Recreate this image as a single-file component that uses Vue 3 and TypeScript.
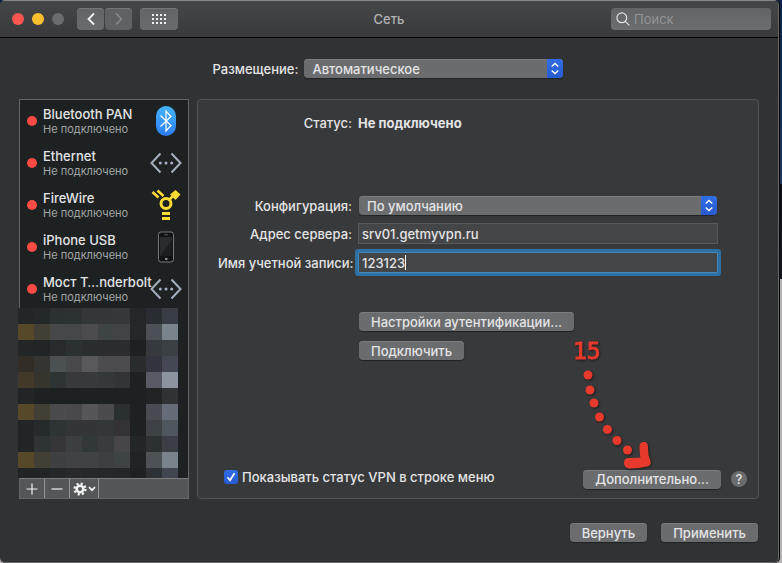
<script setup lang="ts">
import { ref } from 'vue'

type IconName = 'bluetooth' | 'ethernet' | 'firewire' | 'phone'

interface Service {
  name: string
  status: string
  icon: IconName
}

const services: Service[] = [
  { name: 'Bluetooth PAN', status: 'Не подключено', icon: 'bluetooth' },
  { name: 'Ethernet', status: 'Не подключено', icon: 'ethernet' },
  { name: 'FireWire', status: 'Не подключено', icon: 'firewire' },
  { name: 'iPhone USB', status: 'Не подключено', icon: 'phone' },
  { name: 'Мост T…nderbolt', status: 'Не подключено', icon: 'ethernet' },
]

// Pixelated block that hides the remaining services, row by row.
const mosaic: string[][] = [
  ['#222627', '#23282a', '#2b3031', '#2c3132', '#333738', '#343637', '#363738', '#232728', '#282d31', '#383c44'],
  ['#57482a', '#424034', '#464748', '#464748', '#4c4c4e', '#3e4344', '#404445', '#232728', '#4a5055', '#79838b'],
  ['#222627', '#212526', '#272b2b', '#2b3031', '#292d2e', '#2a2c2d', '#2b2c2d', '#1d2122', '#343a3d', '#3a4044'],
  ['#322e27', '#343432', '#4b5152', '#49494b', '#59595b', '#4c4c4e', '#4c4c4e', '#282c2d', '#32353e', '#434854'],
  ['#43392a', '#35342d', '#2e3334', '#38393b', '#37393b', '#343839', '#333436', '#1d2122', '#585b65', '#8b949f'],
  ['#212526', '#1d2122', '#1c2021', '#1c2021', '#1d2122', '#1d2122', '#1d2122', '#1d2122', '#202425', '#2f3335'],
  ['#57482a', '#424034', '#4b4b4d', '#49494b', '#56565a', '#4b4b4d', '#2a2f30', '#1d2122', '#484c52', '#666d78'],
  ['#222527', '#252a2b', '#2e3334', '#343537', '#343537', '#333738', '#333335', '#1d2122', '#3c4246', '#4e575e'],
  ['#212526', '#2e3334', '#363638', '#3b3f40', '#32383a', '#383c3d', '#464648', '#222627', '#2b3033', '#3b3e45'],
  ['#57482a', '#424034', '#3f4041', '#404243', '#404243', '#3e3f40', '#3e4344', '#1f2324', '#4c5256', '#79838b'],
  ['#202425', '#212526', '#232728', '#29292b', '#252729', '#252729', '#232728', '#1d2122', '#2c3135', '#40454f'],
]

const search = ref('')
const location = ref('Автоматическое')
const configuration = ref('По умолчанию')
const server = ref('srv01.getmyvpn.ru')
const account = ref('123123')
const showStatus = ref(true)
const appGrid = [0, 4, 8, 12]
</script>

<template>
  <main class="window">
    <header class="titlebar">
      <div class="tools">
        <div class="lights">
          <button class="light close" aria-label="Закрыть"></button>
          <button class="light minimise" aria-label="Свернуть"></button>
          <button class="light zoom" aria-label="Развернуть" disabled></button>
        </div>
        <div class="nav">
          <button class="tool" aria-label="Назад">
            <svg width="10" height="14" viewBox="0 0 10 14"><path d="M8 1.500 2.500 7 8 12.500" fill="none" stroke="#f0f0f0" stroke-width="1.800" /></svg>
          </button>
          <button class="tool" aria-label="Вперед" disabled>
            <svg width="10" height="14" viewBox="0 0 10 14"><path d="M2 1.500 7.500 7 2 12.500" fill="none" stroke="#8a8b8c" stroke-width="1.500" /></svg>
          </button>
        </div>
        <button class="tool all" aria-label="Показать все">
          <svg width="14" height="10" viewBox="0 0 14 10" fill="#efefef">
            <template v-for="x in appGrid" :key="x">
              <rect v-for="y in [0, 4, 8]" :key="y" :x="x" :y="y" width="2" height="2" />
            </template>
          </svg>
        </button>
      </div>
      <h1>Сеть</h1>
      <div class="search">
        <svg width="14" height="14" viewBox="0 0 14 14" fill="none" stroke="#e2e2e2" stroke-width="1.200">
          <circle cx="5.800" cy="5.800" r="4.900" /><path d="m9.300 9.300 4 4" />
        </svg>
        <input v-model="search" type="text" placeholder="Поиск" aria-label="Поиск" />
      </div>
    </header>

    <div class="location">
      <label for="location">Размещение:</label>
      <div class="popup">
        <select id="location" v-model="location"><option>Автоматическое</option></select>
        <svg class="arrows" viewBox="0 0 16 19"><path d="m4.700 7.500 3.300-3 3.300 3M4.700 11.500l3.300 3 3.300-3" /></svg>
      </div>
    </div>

    <div class="body">
      <aside class="sidebar">
        <ul>
          <li v-for="service in services" :key="service.name">
            <button class="service">
              <span class="dot"></span>
              <span class="text">
                <span class="name">{{ service.name }}</span>
                <span class="state">{{ service.status }}</span>
              </span>
              <svg class="icon" viewBox="0 0 32 32" aria-hidden="true">
                <g v-if="service.icon === 'bluetooth'">
                  <defs>
                    <linearGradient id="bt" x2="0" y2="1"><stop stop-color="#43b4fb" /><stop offset="1" stop-color="#2b7df6" /></linearGradient>
                  </defs>
                  <rect x="6" y="1" width="20" height="30" rx="10" fill="url(#bt)" />
                  <path d="m10.500 10.500 10.500 10-5 5.500V6l5 5.500-10.500 10" fill="none" stroke="#fff" stroke-width="1.200" />
                </g>
                <g v-else-if="service.icon === 'ethernet'" fill="#a5b0c6">
                  <path d="M10.500 6.500 1.500 16l9 9.500M21.500 6.500l9 9.500-9 9.500" fill="none" stroke="#a5b0bf" stroke-width="2" />
                  <circle cx="10.300" cy="16" r="1.500" /><circle cx="16" cy="16" r="1.500" /><circle cx="21.700" cy="16" r="1.500" />
                </g>
                <g v-else-if="service.icon === 'firewire'" fill="none" stroke="#fbdc35" stroke-width="2.600">
                  <circle cx="16" cy="14.500" r="5" stroke-width="3" />
                  <path d="m2.500 3 6 5.500M7.500 1.500l6 5.500M19.500 10.500l3-3" />
                  <path d="m25.500 1 5 4.500-5 5.500-5.500-5.500z" fill="#fbdc35" stroke="none" />
                  <path d="M12 24.500h8M12 29.500h8" stroke-width="3" />
                </g>
                <g v-else>
                  <rect x="8.500" y="1" width="15" height="30" rx="2.500" fill="#111214" stroke="#777b7e" />
                  <rect x="10" y="6" width="12" height="19" fill="#292b2d" />
                  <path d="M10 25 22 9v16z" fill="#1c1d1f" />
                  <path d="M14 3.800h4" stroke="#55585a" />
                  <rect x="15" y="27" width="2.500" height="2" fill="#8c8e90" />
                </g>
              </svg>
            </button>
          </li>
        </ul>
        <div class="mosaic" aria-hidden="true">
          <template v-for="(row, y) in mosaic" :key="y">
            <i v-for="(color, x) in row" :key="x" :style="{ background: color }"></i>
          </template>
        </div>
        <div class="actions">
          <button class="action" aria-label="Добавить">
            <svg width="12" height="12" viewBox="0 0 12 12"><path d="M6 .5v11M.5 6h11" stroke="#f2f2f2" stroke-width="1.200" /></svg>
          </button>
          <button class="action" aria-label="Удалить">
            <svg width="12" height="12" viewBox="0 0 12 12"><path d="M.5 6h11" stroke="#f2f2f2" stroke-width="1.200" /></svg>
          </button>
          <button class="action menu" aria-label="Действия">
            <svg width="23" height="14" viewBox="0 0 23 14" fill="none" stroke="#f0f0f0">
              <circle cx="7" cy="7" r="3.300" stroke-width="2.600" />
              <circle cx="7" cy="7" r="5.400" stroke-width="2.400" stroke-dasharray="2.120" />
              <path d="m16 5.200 3 3 3-3" stroke-width="1.700" />
            </svg>
          </button>
        </div>
      </aside>

      <section class="panel">
        <div class="form">
          <span class="label">Статус:</span>
          <strong>Не подключено</strong>
          <label class="label first" for="configuration">Конфигурация:</label>
          <div class="popup inset first">
            <select id="configuration" v-model="configuration"><option>По умолчанию</option></select>
            <svg class="arrows" viewBox="0 0 16 19"><path d="m4.700 7.500 3.300-3 3.300 3M4.700 11.500l3.300 3 3.300-3" /></svg>
          </div>
          <label class="label" for="server">Адрес сервера:</label>
          <input id="server" v-model="server" class="field" type="text" />
          <label class="label" for="account">Имя учетной записи:</label>
          <div class="focused">
            <input id="account" v-model="account" class="field" type="text" />
            <span class="caret"></span>
          </div>
          <div class="buttons">
            <button class="push">Настройки аутентификации...</button>
            <button class="push">Подключить</button>
          </div>
        </div>

        <div class="bottom">
          <label class="check">
            <input v-model="showStatus" type="checkbox" />
            Показывать статус VPN в строке меню
          </label>
          <button class="push">Дополнительно...</button>
          <button class="help" aria-label="Справка">?</button>
        </div>

        <svg class="note" viewBox="0 0 86 132" fill="#e8392d">
          <text x="3" y="21">15</text>
          <circle cx="18" cy="37" r="4.500" />
          <circle cx="20" cy="52" r="4.500" />
          <circle cx="24" cy="65" r="4.500" />
          <circle cx="29.500" cy="79" r="4.500" />
          <circle cx="37.500" cy="91.500" r="4.500" />
          <circle cx="47" cy="102.500" r="4.500" />
          <circle cx="57.500" cy="112" r="4.500" />
          <path d="M69.500 109C69.500 105 71.500 104 74 104C77 104 78 106 78 109L78.500 117L80.500 123C81.500 126 80 128 77 128.500L69 130L60 130.500C56 130.500 54 128 54 125C54 121 56 120 60 120L70.500 119.500Q69.500 116 69.500 109Z" />
        </svg>
      </section>
    </div>

    <footer class="footer">
      <button class="push">Вернуть</button>
      <button class="push">Применить</button>
    </footer>
  </main>
</template>

<style>
body {
  background: linear-gradient(#0c2448 0, #1b355b 184px, #0d0f14 184px, #15171d 279px, #b5b3b3 279px);
}
</style>

<style scoped>
* {
  box-sizing: border-box;
}

.window,
button,
input,
select {
  font-family: Inter, "Liberation Sans", sans-serif;
  font-size: 13px;
  line-height: 16px;
  color: #e4e4e5;
}

.window {
  display: flex;
  flex-direction: column;
  min-height: 100vh;
  margin-right: 3px;
  overflow: hidden;
  background: #313234;
  border-right: 1px solid #66686a;
  border-bottom: 1px solid #66686a;
  border-radius: 5px;
  box-shadow: 1px 0 #050505;
  font-weight: 500;
}

button {
  margin: 0;
  padding: 0;
  border: 0;
  font-weight: 500;
}

.titlebar {
  display: grid;
  grid-template-columns: 1fr auto 1fr;
  align-items: center;
  height: 38px;
  padding: 0 7px;
  background: linear-gradient(#444748, #39393b);
  border-top: 1px solid #858889;
  border-bottom: 1px solid #000;
}

.tools,
.lights,
.nav {
  display: flex;
  align-items: center;
}

.lights {
  gap: 8px;
  margin: 0 13px 0 5px;
}

.light {
  width: 12px;
  height: 12px;
  border-radius: 50%;
}

.close {
  background: #fc5650;
}

.minimise {
  background: #fcbf2f;
}

.zoom {
  background: #6b6c6e;
}

.nav {
  gap: 1px;
  margin-right: 8px;
}

.tool {
  display: grid;
  place-items: center;
  width: 27px;
  height: 22px;
  background: linear-gradient(#626466, #696b6c);
  border-radius: 4px;
  box-shadow: inset 0 1px #737576;
}

.tool:disabled {
  background: #5f6163;
}

.all {
  width: 38px;
}

h1 {
  margin: 0;
  font-size: 13px;
  font-weight: 500;
  color: #b2b3b4;
}

.search {
  display: flex;
  align-items: center;
  justify-self: end;
  gap: 4px;
  width: 160px;
  height: 22px;
  padding: 0 5px;
  background: linear-gradient(#626465, #6b6d6e);
  border-radius: 4px;
}

.search input {
  flex: 1;
  min-width: 0;
  padding: 0;
  background: none;
  border: 0;
}

.search input::placeholder {
  color: #929495;
}

.location {
  display: flex;
  align-items: center;
  justify-content: center;
  gap: 6px;
  padding: 21px 2px 21px 0;
}

.popup {
  position: relative;
  width: 259px;
  height: 19px;
}

select {
  display: block;
  width: 100%;
  height: 19px;
  padding: 0 24px 0 8px;
  appearance: none;
  background: #6b6c6e;
  border: 0;
  border-radius: 4px;
  box-shadow: 0 1px 1px #222325, inset 0 1px #7b7c7e;
  font-weight: 500;
}

.arrows {
  position: absolute;
  top: 0;
  right: 0;
  width: 16px;
  height: 19px;
  background: linear-gradient(#2f6de5, #285bd0);
  border-radius: 0 4px 4px 0;
  fill: none;
  stroke: #fff;
  stroke-width: 1.400;
  pointer-events: none;
}

.body {
  display: grid;
  grid-template-columns: 170px 1fr;
  flex: 1;
  gap: 8px;
  padding: 0 19px;
}

.sidebar {
  display: flex;
  flex-direction: column;
  background: #1d2122;
  border: 1px solid #646668;
}

ul {
  margin: 0;
  padding: 0;
  list-style: none;
}

.service {
  display: flex;
  align-items: center;
  width: 100%;
  height: 42px;
  padding: 0 6px 0 7px;
  background: none;
  text-align: left;
}

.dot {
  width: 10px;
  height: 10px;
  margin-right: 6px;
  background: #fc4b45;
  border-radius: 50%;
}

.text {
  flex: 1;
  min-width: 0;
  white-space: nowrap;
}

.name,
.state {
  display: block;
}

.state {
  font-size: 11px;
  font-weight: 400;
  line-height: 14px;
  color: #a3a5a5;
}

.icon {
  flex: none;
  width: 32px;
  height: 32px;
}

.mosaic {
  display: grid;
  grid-template-columns: repeat(10, 16px);
  grid-auto-rows: 16px;
  flex: 1 1 0;
  min-height: 169px;
  margin: -2px 0 0 -2px;
  overflow: hidden;
}

.actions {
  display: flex;
  height: 20px;
  background: #555657;
  border-top: 1px solid #7b7c7d;
}

.action {
  display: grid;
  place-items: center;
  width: 25px;
  background: none;
  border-right: 1px solid #949596;
}

.menu {
  width: 29px;
}

.panel {
  position: relative;
  display: flex;
  flex-direction: column;
  padding: 13px 11px 9px 20px;
  background: #38393b;
  border: 1px solid #545557;
  border-radius: 4px;
}

.form {
  display: grid;
  grid-template-columns: 134px 1fr;
  align-items: center;
  gap: 8px 6px;
  margin-right: 29px;
}

.label {
  text-align: right;
  white-space: nowrap;
}

.first {
  margin-top: 55px;
}

strong {
  line-height: 20px;
  font-weight: 700;
}

.inset {
  width: auto;
  margin-right: 1px;
  margin-left: 1px;
}

.field {
  display: block;
  width: 100%;
  height: 21px;
  padding: 0 3px;
  background: #444547;
  border: 1px solid #57585a;
  outline: 0;
  font-weight: 500;
}

.focused {
  position: relative;
}

.focused .field {
  border-color: #4288b9;
  box-shadow: 0 0 0 3px #2d70a3;
  border-radius: 1px;
}

.caret {
  position: absolute;
  top: 3px;
  left: 47px;
  width: 1px;
  height: 15px;
  background: #fff;
}

.buttons {
  display: flex;
  flex-direction: column;
  grid-column: 2;
  align-items: flex-start;
  gap: 10px;
  margin: 31px 0 0 1px;
}

.push {
  height: 19px;
  padding: 0 12px;
  background: #6b6c6e;
  border-radius: 4px;
  box-shadow: 0 1px 1px #222325, inset 0 1px #7b7c7e;
  white-space: nowrap;
}

.bottom {
  display: flex;
  align-items: center;
  gap: 10px;
  margin-top: auto;
}

.check {
  display: flex;
  align-items: center;
  gap: 4px;
  margin: 0 auto 4px 6px;
}

.check input {
  width: 14px;
  height: 14px;
  margin: 0;
  appearance: none;
  background: #6b6c6e;
  border-radius: 3px;
}

.check input:checked {
  background: url("data:image/svg+xml,%3Csvg xmlns='http://www.w3.org/2000/svg' viewBox='0 0 14 14'%3E%3Cpath d='m3.500 7.300 2.500 3 4.500-7' fill='none' stroke='white' stroke-width='1.700'/%3E%3C/svg%3E"), linear-gradient(#2f6de5, #285bd0);
}

.help {
  width: 16px;
  height: 16px;
  background: #6b6c6e;
  border-radius: 50%;
}

.note {
  position: absolute;
  right: 102px;
  bottom: 28px;
  width: 86px;
  height: 132px;
  filter: drop-shadow(1px 1px 1px #1c1c1c);
  pointer-events: none;
}

.note text {
  font-family: "DejaVu Sans Mono", monospace;
  font-size: 23px;
  stroke: #e8392d;
  stroke-width: 1;
}

.footer {
  display: flex;
  justify-content: flex-end;
  gap: 14px;
  padding: 24px 20px 20px;
}
</style>
